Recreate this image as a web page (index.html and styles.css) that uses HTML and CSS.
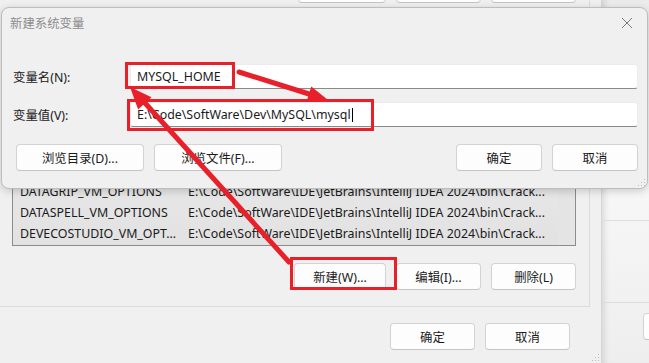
FILE: index.html
```html
<!DOCTYPE html>
<html lang="zh-CN">
<head>
    <meta charset="UTF-8">
    <title>新建系统变量</title>
    <link rel="stylesheet" href="styles.css">
</head>
<body>
    <div class="desk">
        <!-- 后面的环境变量窗口 -->
        <div class="env-window">
            <div class="group">
                <div class="btn-row top-row">
                    <button class="btn">新建(N)...</button>
                    <button class="btn">编辑(E)...</button>
                    <button class="btn">删除(D)</button>
                </div>
                <div class="listbox">
                    <div class="list-row"><span class="col-name">DATAGRIP_VM_OPTIONS</span><span class="col-value">E:\Code\SoftWare\IDE\JetBrains\IntelliJ IDEA 2024\bin\Crack...</span></div>
                    <div class="list-row"><span class="col-name">DATASPELL_VM_OPTIONS</span><span class="col-value">E:\Code\SoftWare\IDE\JetBrains\IntelliJ IDEA 2024\bin\Crack...</span></div>
                    <div class="list-row"><span class="col-name">DEVECOSTUDIO_VM_OPT...</span><span class="col-value">E:\Code\SoftWare\IDE\JetBrains\IntelliJ IDEA 2024\bin\Crack...</span></div>
                    <div class="scrollbar"></div>
                </div>
                <div class="btn-row list-buttons">
                    <button class="btn">新建(W)...</button>
                    <button class="btn">编辑(I)...</button>
                    <button class="btn">删除(L)</button>
                </div>
            </div>
            <div class="btn-row footer">
                <button class="btn">确定</button>
                <button class="btn">取消</button>
            </div>
            <div class="grip"></div>
        </div>

        <div class="side-window">
            <div class="side-line one"></div>
            <div class="side-line two"></div>
            <button class="btn side-btn"></button>
        </div>

        <!-- 新建系统变量 对话框 -->
        <div class="dialog">
            <div class="titlebar">
                <span class="title">新建系统变量</span>
                <svg class="close" width="12" height="12" viewBox="0 0 12 12">
                    <path d="M1 1 L11 11 M11 1 L1 11" stroke="#7a7a7a" stroke-width="1" fill="none"/>
                </svg>
            </div>
            <div class="form">
                <div class="field">
                    <label>变量名(N):</label>
                    <div class="input">MYSQL_HOME</div>
                </div>
                <div class="field">
                    <label>变量值(V):</label>
                    <div class="input">E:\Code\SoftWare\Dev\MySQL\mysql<span class="caret"></span></div>
                </div>
            </div>
            <div class="dialog-buttons">
                <button class="btn wide">浏览目录(D)...</button>
                <button class="btn wide">浏览文件(F)...</button>
                <span class="spacer"></span>
                <button class="btn">确定</button>
                <button class="btn">取消</button>
            </div>
            <div class="grip"></div>
        </div>

        <!-- 标注 -->
        <div class="mark mark-name"></div>
        <div class="mark mark-value"></div>
        <div class="mark mark-new"></div>
        <svg class="arrows" width="649" height="363" viewBox="0 0 649 363">
            <g stroke="#e8202a" stroke-width="5" stroke-linecap="round" fill="#e8202a">
                <line x1="239" y1="72" x2="309" y2="94"/>
                <polygon stroke="none" points="328,100 306.5,101.7 311.3,86.5"/>
                <line x1="289" y1="262" x2="145" y2="103"/>
                <polygon stroke="none" points="130,87 151.5,97.2 138.1,109.4"/>
            </g>
        </svg>
    </div>
</body>
</html>
```

FILE: styles.css
```css
* { box-sizing: border-box; }
body {
    margin: 0;
    width: 649px;
    height: 363px;
    overflow: hidden;
    font-family: "Noto Sans", "Noto Sans CJK SC", sans-serif;
    font-size: 12.4px;
    color: #1a1a1a;
    background: #e6e6e6;
}
.desk { position: relative; width: 649px; height: 363px; }

.btn {
    font: inherit;
    color: #1a1a1a;
    background: #fdfdfd;
    border: 1px solid #d3d3d3;
    border-bottom-color: #c4c4c4;
    border-radius: 4px;
    height: 27px;
    width: 85px;
    padding: 0;
}

.btn-row { display: flex; justify-content: flex-end; gap: 10px; }

/* background window */
.env-window {
    position: absolute;
    left: 0;
    top: -24px;
    width: 602px;
    height: 387px;
    background: #f0f0f0;
    border-right: 1px solid #d6d6d6;
}
.group {
    width: 590px;
    border-right: 1px solid #dcdcdc;
    border-bottom: 1px solid #dcdcdc;
    padding-bottom: 16px;
}
.top-row { padding-right: 13px; }
.top-row .btn { width: 85px; }
.top-row .btn:first-child { width: 88px; }
.listbox {
    position: relative;
    margin: 7px 13px 0 12px;
    height: 236px;
    border: 1px solid #8c8c8c;
    border-top: none;
    background: linear-gradient(180deg, #f2f2f2 0%, #e9e9e9 60%, #e2e2e2 100%);
    display: flex;
    flex-direction: column;
    justify-content: flex-end;
    padding-bottom: 1px;
}
.list-row { display: flex; height: 21px; align-items: center; white-space: nowrap; }
.col-name { width: 175px; padding-left: 7px; }
.col-value { width: 372px; overflow: hidden; }
.scrollbar {
    position: absolute;
    right: 0;
    top: 0;
    bottom: 0;
    width: 17px;
    background: #e4e4e4;
}
.list-buttons { margin-top: 17px; padding-right: 13px; }
.list-buttons .btn:first-child { width: 92px; }
.footer { margin-top: 16px; padding-right: 31px; }
.footer .btn { width: 85px; }

.grip {
    position: absolute;
    right: 2px;
    bottom: 2px;
    width: 8px;
    height: 8px;
    background: radial-gradient(circle, #bdbdbd 0.8px, transparent 1px) 0 0 / 3px 3px;
    clip-path: polygon(100% 0, 100% 100%, 0 100%);
}

.side-window {
    position: absolute;
    left: 602px;
    top: 0;
    right: 0;
    height: 363px;
    background: linear-gradient(180deg, #ececec 0%, #f7f7f7 50%, #eeeeee 100%);
    box-shadow: inset 6px 0 6px -4px rgba(0,0,0,0.12);
}
.side-line { position: absolute; left: 0; right: 0; height: 1px; background: #dddddd; }
.side-line.one { top: 220px; }
.side-line.two { top: 302px; }
.side-btn { position: absolute; left: 41px; top: 313px; width: 40px; }

/* dialog */
.dialog {
    position: absolute;
    left: 1px;
    top: 7px;
    width: 647px;
    height: 182px;
    background: #f0f0f0;
    border: 1px solid #bdbdbd;
    border-radius: 8px;
    box-shadow: 0 2px 8px rgba(0,0,0,0.18);
    padding: 0 9px 0 11px;
}
.titlebar {
    display: flex;
    align-items: center;
    height: 29px;
    margin-left: -3px;
}
.title { color: #8c8c8c; }
.close { margin-left: auto; margin-right: 5px; }
.form { display: flex; flex-direction: column; gap: 13px; margin-top: 27px; }
.field { display: flex; align-items: center; }
.field label { width: 117px; }
.input {
    flex: 1;
    height: 25px;
    background: #ffffff;
    border: 1px solid #ececec;
    border-bottom: 1px solid #8a8a8a;
    border-radius: 3px;
    padding-left: 6px;
    display: flex;
    align-items: center;
    white-space: nowrap;
}
.caret { display: inline-block; width: 1px; height: 14px; background: #000; margin-left: 1px; }
.dialog-buttons { display: flex; gap: 10px; margin-top: 17px; padding-left: 3px; }
.dialog-buttons .btn { width: 86px; }
.dialog-buttons .btn.wide { width: 128px; }
.spacer { flex: 1; }

/* red marks */
.mark { position: absolute; border: 3px solid #e8202a; }
.mark-name { left: 125px; top: 62px; width: 110px; height: 27px; }
.mark-value { left: 127px; top: 99px; width: 247px; height: 32px; }
.mark-new { left: 290px; top: 257px; width: 107px; height: 33px; }
.arrows { position: absolute; left: 0; top: 0; }
```
